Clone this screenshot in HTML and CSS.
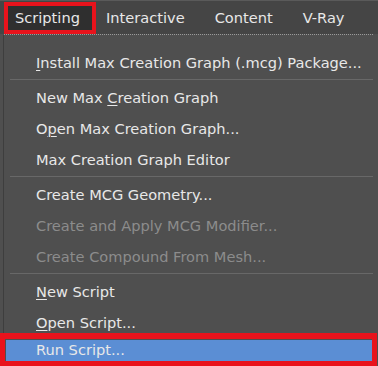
FILE: index.html
```html
<!DOCTYPE html>
<html>
<head>
<meta charset="utf-8">
<link rel="stylesheet" href="styles.css">
</head>
<body>
<div class="screen">
  <div class="menubar">
    <div class="top-item active">Scripting</div>
    <div class="top-item">Interactive</div>
    <div class="top-item">Content</div>
    <div class="top-item">V-Ray</div>
  </div>
  <div class="dotline"></div>
  <div class="dropdown">
    <div class="item"><u>I</u>nstall Max Creation Graph (.mcg) Package...</div>
    <div class="sep"></div>
    <div class="item">New Max <u>C</u>reation Graph</div>
    <div class="item">O<u>p</u>en Max Creation Graph...</div>
    <div class="item">Max Creation Graph Editor</div>
    <div class="sep"></div>
    <div class="item">Create MCG Geometry...</div>
    <div class="item disabled">Create and Apply MCG Modifier...</div>
    <div class="item disabled">Create Compound From Mesh...</div>
    <div class="sep"></div>
    <div class="item"><u>N</u>ew Script</div>
    <div class="item"><u>O</u>pen Script...</div>
    <div class="item selected">Run Script...</div>
  </div>
  <div class="mark mark-top"></div>
  <div class="mark mark-bottom"></div>
</div>
</body>
</html>
```
FILE: styles.css
```css
html, body {
  margin: 0;
  padding: 0;
  background: #4e4e4e;
}
.screen {
  position: relative;
  width: 378px;
  height: 366px;
  overflow: hidden;
  font-family: "DejaVu Sans", sans-serif;
  font-size: 14.6px;
  color: #e8e8e8;
  background: #4f4f4f;
}
.menubar {
  display: flex;
  height: 34px;
  align-items: center;
  background: #454545;
  border-top: 1px solid #5a5a5a;
  box-sizing: border-box;
}
.top-item {
  padding: 0 15px;
  height: 26px;
  line-height: 26px;
}
.top-item.active {
  flex: none;
  box-sizing: border-box;
  width: 84px;
  margin-left: 8px;
  padding: 0 0 0 7px;
  margin-right: -1px;
  background: #2f2f2f;
}
.dotline {
  height: 1px;
  margin: 0 5px 0 4px;
  background-image: linear-gradient(90deg, #9a9a9a 50%, transparent 50%);
  background-size: 2px 1px;
}
.dropdown {
  margin-left: 3px;
  border-left: 1px solid #3e3e3e;
  padding-top: 12px;
  display: flex;
  flex-direction: column;
}
.item {
  height: 31px;
  line-height: 31px;
  padding-left: 32px;
  white-space: nowrap;
}
.item u {
  text-decoration-thickness: 1px;
  text-underline-offset: 2px;
}
.item.disabled {
  color: #8c8c8c;
}
.sep {
  height: 1px;
  background: #686868;
  margin: 1px 5px 2px 6px;
}
.item.selected {
  background: #5b8ed4;
  margin: 2px 6px 0 2px;
  padding-left: 30px;
  height: 22px;
  line-height: 20px;
}
.mark {
  position: absolute;
  border: 4px solid #e8131c;
  box-sizing: border-box;
}
.mark-top {
  left: 4px;
  top: 2px;
  width: 92px;
  height: 32px;
}
.mark-bottom {
  left: 0;
  top: 333px;
  width: 377px;
  height: 33px;
  border-width: 6px 5px 5px 5px;
}
```
